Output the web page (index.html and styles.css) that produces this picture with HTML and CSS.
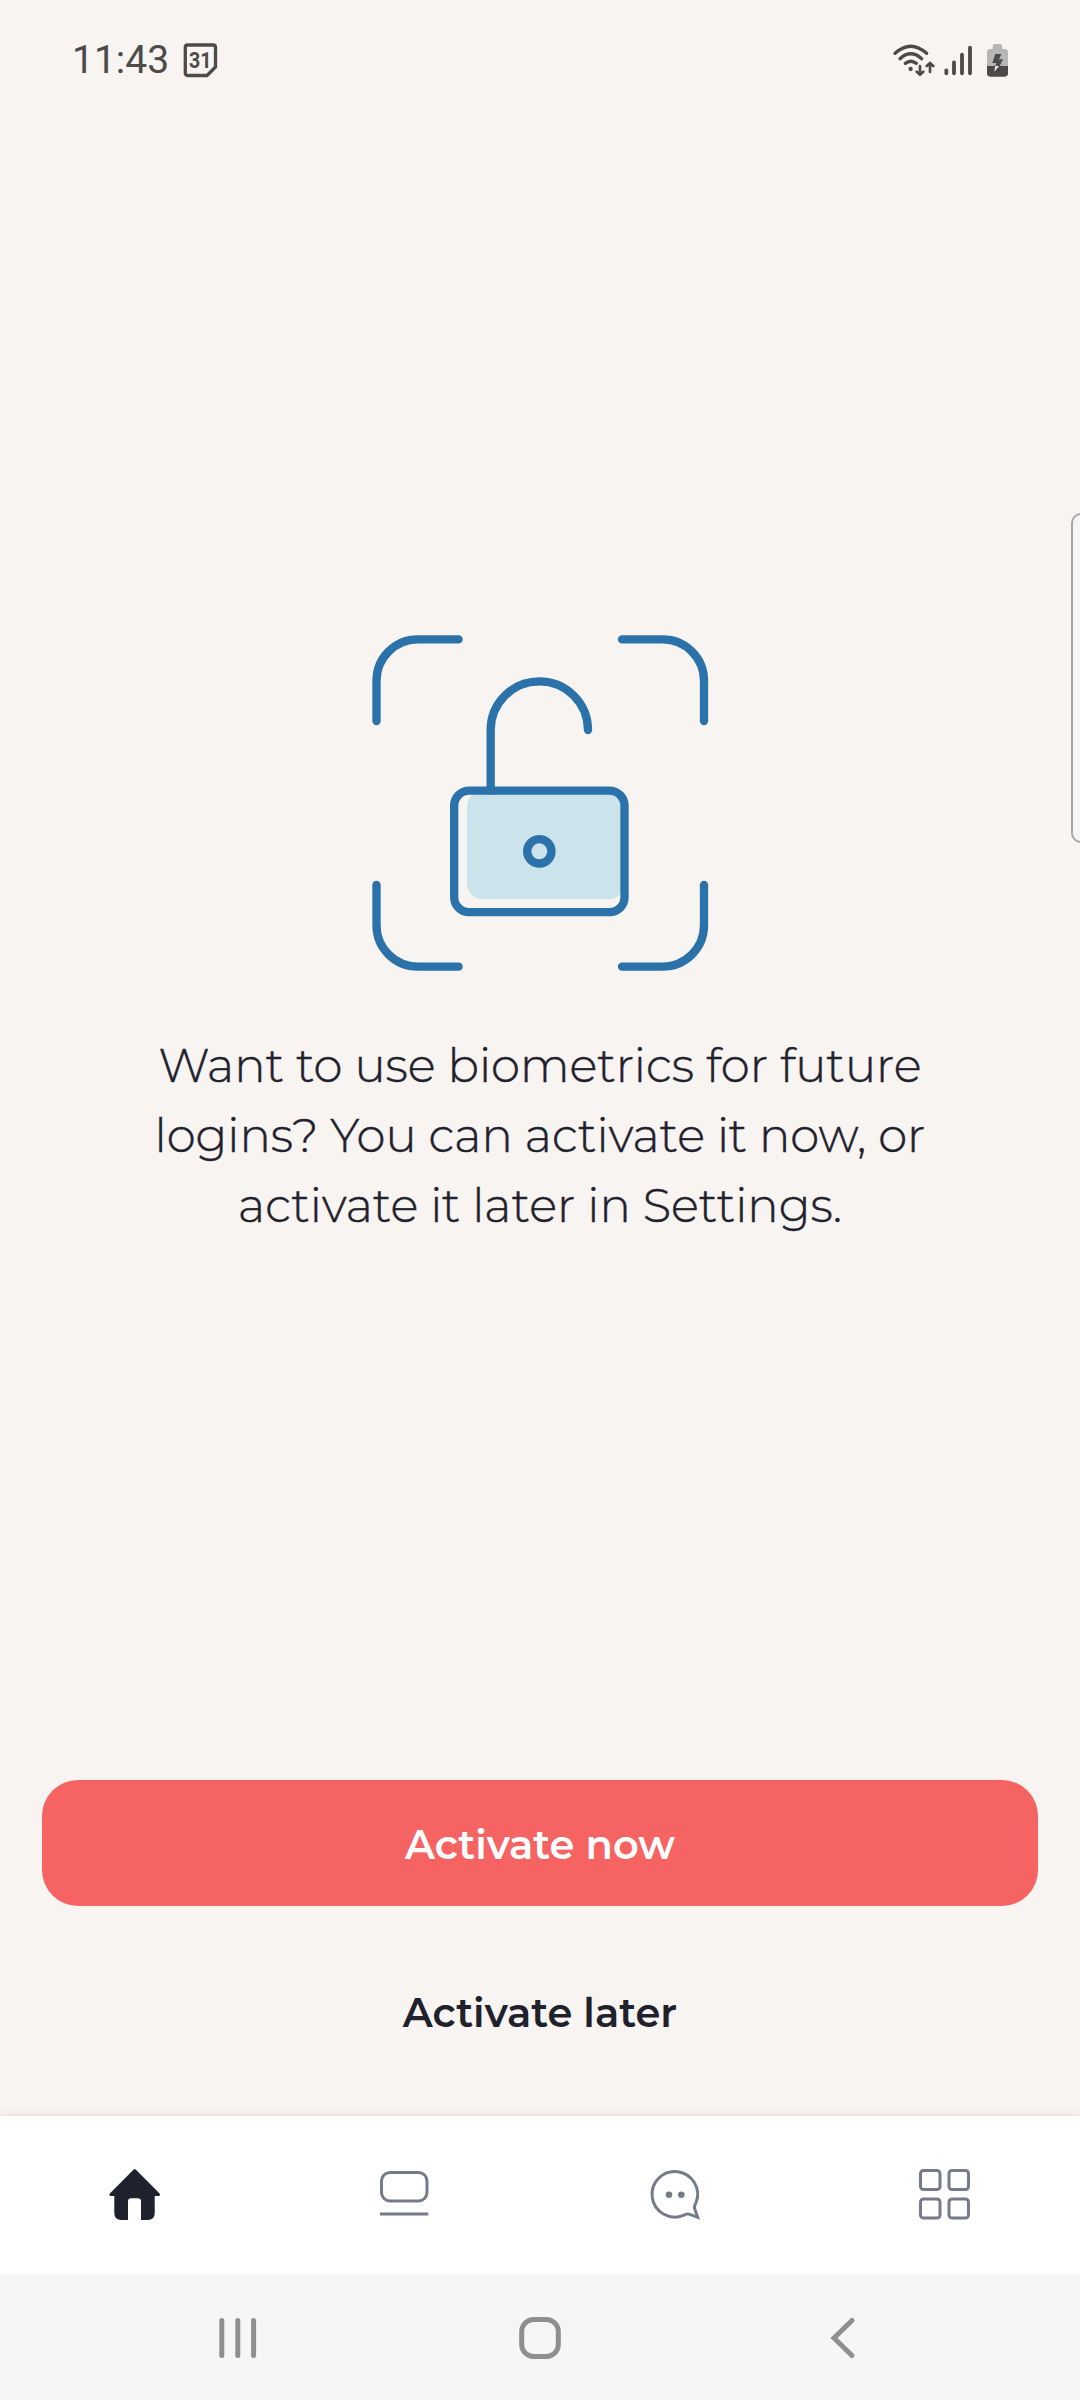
FILE: index.html
```html
<!DOCTYPE html>
<html lang="en">
<head>
<meta charset="utf-8">
<title>Biometric login</title>
<link rel="stylesheet" href="styles.css">
</head>
<body>
<div class="screen">
  <header class="status-bar">
    <span class="clock">11:43</span>
    <svg class="calendar" width="40" height="40" viewBox="0 0 40 40">
      <path d="M7.500 5H33Q35.500 5 35.500 7.500V27L27 35.500H7.500Q5.300 35.500 5.300 33.300V7.500Q5.300 5 7.500 5Z" fill="none" stroke="#4c4b49" stroke-width="3.300"/>
      <text x="20.300" y="27.500" text-anchor="middle" textLength="22.500" lengthAdjust="spacingAndGlyphs" class="calendar-day">31</text>
    </svg>
    <svg class="signals" width="150" height="60" viewBox="0 0 450 180">
      <g fill="none" stroke="#4c4b49" stroke-width="10" stroke-linecap="round">
        <path d="M45 70Q92 27 140 70"/>
        <path d="M60 86Q92 57 125 86"/>
        <path d="M76 100Q92 87 109 100"/>
        <path d="M120 108V132M110 125L120 134L130 125" stroke-width="8"/>
        <path d="M150 126V100M140 108L150 99L160 108" stroke-width="8"/>
        <path d="M199 121V130M222 97V130M246 74V130M270 53V130" stroke-width="11.500"/>
      </g>
      <circle cx="92" cy="117" r="6.500" fill="#4c4b49"/>
      <path d="M338 57V48Q338 42 344 42H360Q366 42 366 48V57H374Q384 57 384 67V108H321V67Q321 57 331 57Z" fill="#b8b6b4"/>
      <path d="M321 108H384V130Q384 140 374 140H331Q321 140 321 130Z" fill="#4c4b49"/>
      <path d="M346 72H364L357 88H369L359 108H346L349 99H337Z" fill="#4c4b49"/>
      <path d="M346 108H357L343 125Z" fill="#f8f4f1"/>
    </svg>
  </header>

  <main class="content">
    <svg class="lock" width="360" height="360" viewBox="0 0 1080 1080">
      <rect x="321" y="512" width="472" height="326" rx="48" fill="#cbe3ea"/>
      <g fill="none" stroke="#2a72a9" stroke-width="25" stroke-linecap="round">
        <path d="M49.500 303V182A124 124 0 0 1 173.500 58H296"/>
        <path d="M786 58H908A124 124 0 0 1 1032 182V303"/>
        <path d="M49.500 795V916A124 124 0 0 0 173.500 1040H296"/>
        <path d="M786 1040H908A124 124 0 0 0 1032 916V795"/>
        <path d="M392 512V330A146 146 0 0 1 684 330"/>
        <rect x="282.500" y="512" width="511" height="364.500" rx="45"/>
        <circle cx="538" cy="694" r="36.500"/>
      </g>
    </svg>
    <p class="message">Want to use biometrics for future<br>logins? You can activate it now, or<br>activate it later in Settings.</p>
  </main>

  <div class="actions">
    <button class="button primary">Activate now</button>
    <button class="button">Activate later</button>
  </div>

  <nav class="tabs">
    <a class="tab"><svg width="60" height="60" viewBox="0 0 60 60">
      <path d="M28.700 4.600Q29.700 3.600 30.700 4.600L54.600 28.600Q55.800 31 53.500 31H49.700V48Q49.700 55 42.700 55H36V36.300Q36 33.300 33 33.300H26Q23 33.300 23 36.300V55H16.300Q9.300 55 9.300 48V31H5.800Q3.600 31 4.800 28.600Z" fill="#1f212d"/>
    </svg></a>
    <a class="tab"><svg class="outline" width="60" height="60" viewBox="0 0 60 60">
      <rect x="6.500" y="7.500" width="45.500" height="28.500" rx="8.500"/>
      <path d="M5 49H53.300"/>
    </svg></a>
    <a class="tab"><svg class="outline" width="60" height="60" viewBox="0 0 60 60">
      <path d="M51 37.800A22.800 22.800 0 1 0 38.500 50.400Q41.500 48.200 44 49.200L52.700 52.300L49.600 43.500Q48.800 41.300 51 37.800Z"/>
      <circle class="dot" cx="24" cy="29.700" r="3.300"/>
      <circle class="dot" cx="36.300" cy="29.700" r="3.300"/>
    </svg></a>
    <a class="tab"><svg class="outline" width="60" height="60" viewBox="0 0 60 60">
      <rect x="5.500" y="5.500" width="19.500" height="19" rx="3"/>
      <rect x="34" y="5.500" width="19.500" height="19" rx="3"/>
      <rect x="5.500" y="34" width="19.500" height="19" rx="3"/>
      <rect x="34" y="34" width="19.500" height="19" rx="3"/>
    </svg></a>
  </nav>

  <footer class="system-nav">
    <svg width="60" height="60" viewBox="0 0 60 60"><path d="M14.800 13.500V48.500M30.800 13.500V48.500M46.600 13.500V48.500"/></svg>
    <svg width="60" height="60" viewBox="0 0 60 60"><rect x="11.700" y="12.500" width="36.600" height="37" rx="12"/></svg>
    <svg width="60" height="60" viewBox="0 0 60 60"><path d="M39 13.500L21 31L39 48.500"/></svg>
  </footer>
  <div class="edge-handle"></div>
</div>
</body>
</html>
```
FILE: styles.css
```css
* { box-sizing: border-box; }
body { margin: 0; background: #f8f4f1; }
.screen {
  position: relative;
  width: 1080px;
  height: 2400px;
  display: flex;
  flex-direction: column;
  overflow: hidden;
  background: #f8f4f1;
  color: #1f212d;
  font-family: Montserrat, Inter, sans-serif;
}
.status-bar {
  height: 120px;
  padding: 30px 50px 30px 72px;
  display: flex;
  align-items: center;
  color: #4c4b49;
}
.clock { width: 108px; font: 400 39px/60px Roboto, sans-serif; white-space: nowrap; }
.calendar-day { font: 700 21.5px Roboto, sans-serif; fill: #4c4b49; }
.signals { margin-left: auto; }
.content {
  flex: 1;
  padding-top: 500px;
  display: flex;
  flex-direction: column;
  align-items: center;
}
.message {
  margin: 51px 0 0;
  font-size: 46.55px;
  font-weight: 300;
  line-height: 70px;
  text-align: center;
  white-space: nowrap;
  -webkit-text-stroke: .45px currentColor;
}
.actions { padding: 0 42px 42px; display: flex; flex-direction: column; gap: 42px; }
.button {
  height: 126px;
  border: 0;
  padding: 3px 0 0;
  border-radius: 36px;
  background: none;
  color: inherit;
  font: 600 40px/120px Montserrat, Inter, sans-serif;
}
.primary { background: #f66363; color: #fff; }
.tabs {
  height: 158px;
  display: grid;
  grid-template-columns: repeat(4, 1fr);
  background: #fff;
  box-shadow: 0 -1px 8px rgba(80, 60, 50, .12);
}
.tab { display: flex; align-items: center; justify-content: center; }
.outline { fill: none; stroke: #757b89; stroke-width: 3; }
.outline .dot { fill: #757b89; stroke: none; }
.system-nav {
  height: 126px;
  padding: 0 86px;
  display: grid;
  grid-template-columns: repeat(3, 1fr);
  place-items: center;
  background: #f6f6f6;
  fill: none;
  stroke: #8f8f8f;
  stroke-width: 5;
  stroke-linecap: round;
}
.edge-handle {
  position: absolute;
  top: 513px;
  left: 1071px;
  width: 24px;
  height: 330px;
  border: 2px solid #a9a7a5;
  border-radius: 10px;
  background: #f5f5f5;
}
```
